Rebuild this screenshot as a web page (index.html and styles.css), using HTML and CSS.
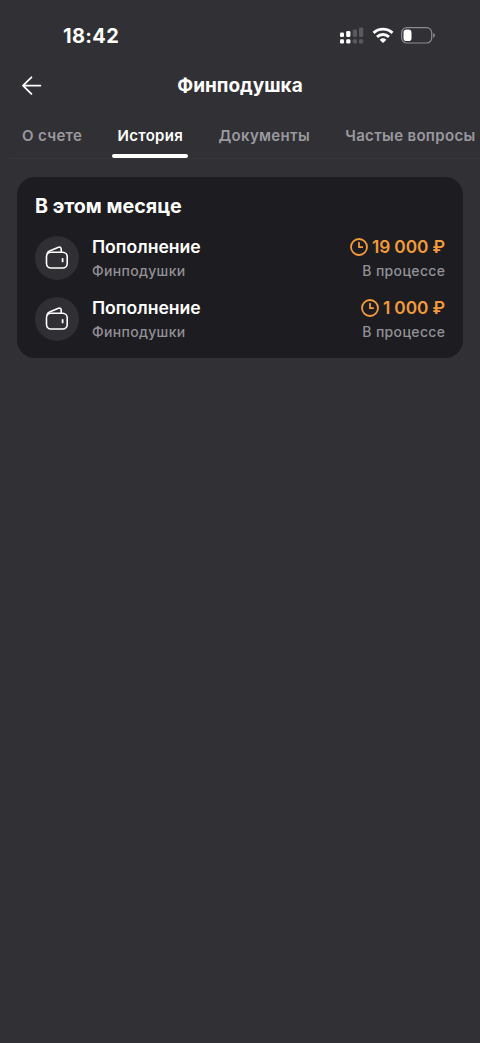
FILE: index.html
```html
<!DOCTYPE html>
<html lang="ru">
<head>
<meta charset="utf-8">
<meta name="viewport" content="width=device-width">
<title>Финподушка</title>
<link rel="stylesheet" href="styles.css">
</head>
<body>
<div class="status">
  <span class="time">18:42</span>
  <div class="indicators">
    <svg class="signal" width="26" height="18" viewBox="0 0 26 18">
      <g fill="#fff"><rect x="1" y="5.6" width="4" height="4.5" rx="1.3"/><rect x="7.2" y="4" width="4.2" height="6.1" rx="1.3"/><rect x="1" y="12.3" width="4" height="4.2" rx="1.3"/><rect x="7.2" y="12.3" width="4.2" height="4.2" rx="1.3"/></g>
      <g fill="#5a595f"><rect x="13.8" y="2.4" width="4.2" height="7.7" rx="1.3"/><rect x="20" y="0.5" width="4.2" height="9.6" rx="1.3"/><rect x="13.8" y="12.3" width="4.2" height="4.2" rx="1.3"/><rect x="20" y="12.3" width="4.2" height="4.2" rx="1.3"/></g>
    </svg>
    <svg class="wifi" width="22" height="17" viewBox="0 0 22 17" fill="none" stroke="#fff" stroke-width="2.8">
      <path d="M1.500 5.900C7 .9 15 .9 20.500 5.900"/><path d="M5 9.900c3.500-3.200 8.500-3.200 12 0"/><path d="M7.600 12.700Q11 9.800 14.400 12.700L11 16z" fill="#fff" stroke="none"/>
    </svg>
    <svg class="battery" width="35" height="17" viewBox="0 0 35 17">
      <rect x=".7" y=".7" width="30" height="15.300" rx="5" fill="none" stroke="#8b8a90" stroke-width="1.200"/>
      <rect x="2.500" y="2.600" width="8" height="11.500" rx="3.200" fill="#fff"/>
      <path d="M32.200 5.700q1.800 1 1.800 2.650t-1.800 2.650z" fill="#8b8a90"/>
    </svg>
  </div>
</div>
<header class="header">
  <svg class="back" width="20" height="20" viewBox="0 0 20 20" fill="none" stroke="#fff" stroke-width="1.800" stroke-linecap="round" stroke-linejoin="round"><path d="M18.400 9.600H1M9.400 1.300 1 9.600l8.400 8.300"/></svg>
  <h1 class="title">Финподушка</h1>
</header>
<nav class="tabs">
  <a class="tab">О счете</a>
  <a class="tab active">История</a>
  <a class="tab">Документы</a>
  <a class="tab">Частые вопросы</a>
</nav>
<main class="card">
  <h2 class="month">В этом месяце</h2>
  <div class="row">
    <div class="avatar"><svg width="24" height="24" viewBox="0 0 24 24" fill="none" stroke="#fff" stroke-width="1.600" stroke-linecap="round" stroke-linejoin="round"><rect x="1.500" y="6.300" width="20.700" height="15.700" rx="4.500"/><path d="M2 8.200Q2.300 5.800 4.500 4.900L13.500 1.300q2.400-.7 2.700 1.700V6"/><path d="M17.600 12.800v2.600" stroke-width="1.800"/></svg></div>
    <div class="info"><span class="name">Пополнение</span><span class="sub">Финподушки</span></div>
    <div class="sum"><span class="amount"><svg width="18" height="18" viewBox="0 0 18 18" fill="none" stroke="#f39b3c" stroke-width="1.800" stroke-linecap="round"><circle cx="9" cy="9" r="8"/><path d="M9 4.700V9.200h3.200"/></svg><span class="value">19 000 ₽</span></span><span class="sub">В процессе</span></div>
  </div>
  <div class="row">
    <div class="avatar"><svg width="24" height="24" viewBox="0 0 24 24" fill="none" stroke="#fff" stroke-width="1.600" stroke-linecap="round" stroke-linejoin="round"><rect x="1.500" y="6.300" width="20.700" height="15.700" rx="4.500"/><path d="M2 8.200Q2.300 5.800 4.500 4.900L13.500 1.300q2.400-.7 2.700 1.700V6"/><path d="M17.600 12.800v2.600" stroke-width="1.800"/></svg></div>
    <div class="info"><span class="name">Пополнение</span><span class="sub">Финподушки</span></div>
    <div class="sum"><span class="amount"><svg width="18" height="18" viewBox="0 0 18 18" fill="none" stroke="#f39b3c" stroke-width="1.800" stroke-linecap="round"><circle cx="9" cy="9" r="8"/><path d="M9 4.700V9.200h3.200"/></svg><span class="value">1 000 ₽</span></span><span class="sub">В процессе</span></div>
  </div>
</main>
</body>
</html>
```
FILE: styles.css
```css
* { box-sizing: border-box; }
body {
  margin: 0;
  min-height: 1043px;
  background: #313035;
  color: #fff;
  font-family: Inter, "Liberation Sans", sans-serif;
  overflow: hidden;
}
svg { display: block; flex: none; }
.status {
  display: flex;
  justify-content: space-between;
  align-items: center;
  height: 61px;
  padding: 10px 44px 0 63px;
}
.time { font-size: 20px; font-weight: 700; line-height: 24px; letter-spacing: 0.35px; }
.indicators { display: flex; align-items: center; gap: 7px; }
.header {
  display: grid;
  grid-template-columns: 20px 1fr 20px;
  align-items: center;
  height: 49px;
  padding: 0 22px;
}
.title { margin: 0; font-size: 19px; font-weight: 700; line-height: 24px; text-align: center; }
.tabs {
  display: flex;
  gap: 25.2px;
  height: 49px;
  margin-left: 9px;
  padding-left: 8px;
  border-bottom: 1px solid #37363b;
  white-space: nowrap;
}
.tab {
  display: flex;
  flex: none;
  flex-direction: column;
  justify-content: space-between;
  height: 48px;
  padding: 16px 5px 0;
  font-size: 15px;
  font-weight: 600;
  line-height: 20px;
  letter-spacing: 0.33px;
  color: #9a999e;
}
.tab.active { color: #fff; }
.tab.active::after {
  content: "";
  height: 4px;
  margin: 0 -5px;
  border-radius: 2px;
  background: #fff;
}
.card {
  margin: 18px 17px 0;
  height: 181px;
  padding: 16px 18px 0;
  border-radius: 18px;
  background: #1d1c20;
}
.month { margin: 0; font-size: 19.7px; font-weight: 700; line-height: 26px; }
.row { display: flex; align-items: center; height: 44px; margin-top: 17px; }
.avatar {
  display: grid;
  place-items: center;
  width: 44px;
  height: 44px;
  margin-right: 13px;
  border-radius: 50%;
  background: #302f33;
}
.info, .sum { display: flex; flex-direction: column; }
.sum { margin-left: auto; align-items: flex-end; }
.name, .amount { font-size: 17.6px; font-weight: 600; line-height: 24px; }
.amount { display: flex; align-items: center; gap: 4px; color: #f39b3c; font-size: 17.3px; letter-spacing: -0.1px; }
.sub { font-size: 14px; font-weight: 500; line-height: 23px; letter-spacing: 0.33px; color: #929196; }
.sum .sub { margin-right: -0.3px; }
```
